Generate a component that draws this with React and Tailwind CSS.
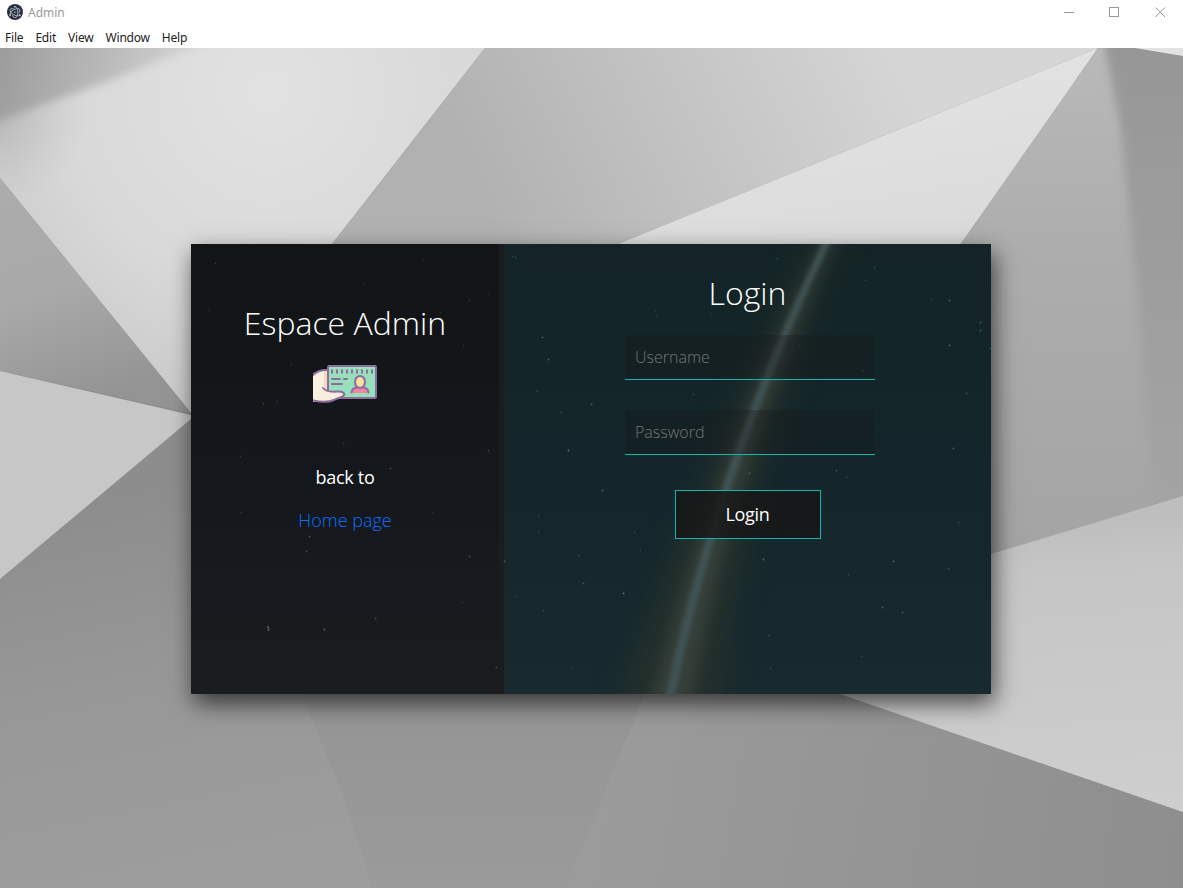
import React from "react";
import { SiElectron } from "react-icons/si";

const STARS = [
  [172, 39, 0.3, "#2d7fa5"], [24, 19, 0.3, "#9ab"], [297, 50, 0.15, "#9ab"], [86, 157, 0.2, "#9cb"],
  [278, 56, 0.2, "#9ab"], [232, 16, 0.2, "#9ab"], [18, 66, 0.2, "#9ab"], [297, 206, 0.3, "#9cb"], [199, 224, 0.3, "#ccc"],
  [118, 292, 0.35, "#ccc"], [115, 307, 0.3, "#ccc"], [278, 312, 0.3, "#ccc"], [184, 374, 0.3, "#ccc"], [133, 385, 0.4, "#ccc"],
  [305, 423, 0.3, "#ccc"], [152, 199, 0.2, "#ccc"], [50, 268, 0.2, "#ccc"], [272, 101, 0.2, "#9ab"], [249, 68, 0.2, "#5aa"],
  [72, 159, 0.25, "#9cb"], [100, 120, 0.2, "#9cb"], [49, 212, 0.2, "#9cb"], [241, 268, 0.2, "#9ab"], [271, 358, 0.15, "#ccc"],
  [321, 12, 0.3, "#4aa"], [324, 13, 0.3, "#4aa"], [351, 93, 0.4, "#9bb"], [357, 115, 0.4, "#aba"], [346, 147, 0.3, "#9bb"],
  [370, 168, 0.3, "#aba"], [377, 206, 0.7, "#5ab0c8"], [400, 160, 0.4, "#aba"], [586, 14, 0.5, "#2d7fa5"], [740, 55, 0.4, "#4878b8"],
  [758, 56, 0.4, "#9bb"], [758, 101, 0.45, "#9bb"], [789, 78, 0.4, "#9bb"], [789, 86, 0.4, "#9bb"], [799, 104, 0.4, "#5ab0c8"],
  [671, 126, 0.3, "#9bb"], [762, 204, 0.4, "#9bb"], [775, 149, 0.3, "#9bb"], [683, 23, 0.2, "#9bb"], [674, 36, 0.2, "#9bb"],
  [464, 67, 0.3, "#4878b8"], [465, 72, 0.3, "#4878b8"], [519, 69, 0.2, "#9bb"], [608, 101, 0.25, "#9bb"], [502, 150, 0.3, "#4aa"],
  [572, 315, 0.45, "#7dd"], [702, 317, 0.45, "#7ca"], [757, 324, 0.3, "#9bb"], [691, 363, 0.4, "#9bb"], [711, 368, 0.4, "#9bb"],
  [578, 391, 0.3, "#9bb"], [432, 349, 0.5, "#9db"], [411, 246, 0.4, "#9db"], [767, 278, 0.3, "#9bb"], [645, 226, 0.35, "#9bb"],
  [655, 233, 0.25, "#9bb"], [558, 229, 0.35, "#ba9"], [657, 330, 0.25, "#9bb"], [670, 412, 0.2, "#9bb"], [387, 311, 0.3, "#9bb"],
  [392, 339, 0.35, "#9bb"], [325, 352, 0.25, "#9bb"], [352, 366, 0.25, "#9bb"], [313, 317, 0.4, "#9bb"], [380, 423, 0.2, "#9bb"],
  [347, 287, 0.2, "#9bb"], [347, 272, 0.2, "#9bb"], [449, 306, 0.2, "#9bb"], [443, 288, 0.2, "#9bb"], [579, 424, 0.2, "#9bb"],
];

function Backdrop() {
  return (
    <svg className="absolute inset-0 size-full" viewBox="0 48 1183 840" preserveAspectRatio="none">
      <defs>
        <radialGradient id="lit" gradientUnits="userSpaceOnUse" cx="270" cy="90" r="400">
          <stop offset="0" stopColor="#e2e2e2" />
          <stop offset=".5" stopColor="#d9d9d9" />
          <stop offset="1" stopColor="#c2c2c2" />
        </radialGradient>
        <linearGradient id="corner" gradientUnits="userSpaceOnUse" x1="0" y1="50" x2="200" y2="85">
          <stop offset="0" stopColor="#9c9c9c" />
          <stop offset=".5" stopColor="#b8b8b8" />
          <stop offset="1" stopColor="#d6d6d6" />
        </linearGradient>
        <radialGradient id="edgeShade" gradientUnits="userSpaceOnUse" cx="-10" cy="110" r="100">
          <stop offset="0" stopColor="#aaaaaa" stopOpacity=".8" />
          <stop offset="1" stopColor="#c4c4c4" stopOpacity="0" />
        </radialGradient>
        <linearGradient id="leftDark" gradientUnits="userSpaceOnUse" x1="20" y1="180" x2="90" y2="400">
          <stop offset="0" stopColor="#acacac" />
          <stop offset=".5" stopColor="#a9a9a9" />
          <stop offset="1" stopColor="#949494" />
        </linearGradient>
        <linearGradient id="topMid" gradientUnits="userSpaceOnUse" x1="500" y1="240" x2="900" y2="50">
          <stop offset="0" stopColor="#b1b1b1" />
          <stop offset=".45" stopColor="#c2c2c2" />
          <stop offset="1" stopColor="#d6d6d6" />
        </linearGradient>
        <linearGradient id="ray" gradientUnits="userSpaceOnUse" x1="900" y1="60" x2="930" y2="250">
          <stop offset="0" stopColor="#e3e3e3" />
          <stop offset="1" stopColor="#dadada" />
        </linearGradient>
        <linearGradient id="rightMid" x1="0" y1="0" x2="0" y2="1">
          <stop offset="0" stopColor="#b9b9b9" />
          <stop offset=".4" stopColor="#adadad" />
          <stop offset="1" stopColor="#a4a4a4" />
        </linearGradient>
        <linearGradient id="rightEdge" x1="0" y1="0" x2="0" y2="1">
          <stop offset="0" stopColor="#979797" />
          <stop offset="1" stopColor="#a4a4a4" />
        </linearGradient>
        <linearGradient id="rightLow" gradientUnits="userSpaceOnUse" x1="1110" y1="520" x2="1130" y2="800">
          <stop offset="0" stopColor="#bebebe" />
          <stop offset=".15" stopColor="#c5c5c5" />
          <stop offset="1" stopColor="#cecece" />
        </linearGradient>
        <linearGradient id="floor" gradientUnits="userSpaceOnUse" x1="100" y1="500" x2="180" y2="888">
          <stop offset="0" stopColor="#8d8d8d" />
          <stop offset=".5" stopColor="#989898" />
          <stop offset="1" stopColor="#9d9d9d" />
        </linearGradient>
        <linearGradient id="floorMid" gradientUnits="userSpaceOnUse" x1="0" y1="694" x2="0" y2="888">
          <stop offset="0" stopColor="#959595" />
          <stop offset="1" stopColor="#9a9a9a" />
        </linearGradient>
        <linearGradient id="floorRight" gradientUnits="userSpaceOnUse" x1="600" y1="800" x2="1183" y2="888">
          <stop offset="0" stopColor="#9b9b9b" />
          <stop offset="1" stopColor="#8e8e8e" />
        </linearGradient>
        <filter id="soft" colorInterpolationFilters="sRGB"><feGaussianBlur stdDeviation="4" /></filter>
      </defs>
      <rect y="48" width="1183" height="840" fill="url(#floor)" />
      <path d="M300 690L345 800L372 888H570L645 694Z" fill="url(#floorMid)" />
      <path d="M645 694L565 888H1183V812L840 694Z" fill="url(#floorRight)" />
      <path d="M0 48H485L332 244L260 480L191 413L0 178Z" fill="url(#lit)" />
      <path d="M0 48H130V220H35L0 178Z" fill="url(#edgeShade)" />
      <path d="M-8 36H222L100 84L-8 123Z" fill="url(#corner)" filter="url(#soft)" />
      <path d="M0 178L191 413L0 371Z" fill="url(#leftDark)" />
      <path d="M0 371L191 415V419L0 579Z" fill="#c7c7c7" />
      <path d="M485 48H1098L618 244H332Z" fill="url(#topMid)" />
      <path d="M1098 48L618 244H962Z" fill="url(#ray)" />
      <path d="M1098 48H1183V496L991 554L900 330Z" fill="url(#rightMid)" />
      <path d="M1103 36H1195V500L1152 506L1138 300L1121 130Z" fill="url(#rightEdge)" filter="url(#soft)" />
      <path d="M1135 48H1183V56Z" fill="#e3e3e3" />
      <path d="M1183 496V812L840 694L991 554Z" fill="url(#rightLow)" />
    </svg>
  );
}

function NightSky() {
  return (
    <svg className="absolute inset-0 size-full" viewBox="0 0 800 450">
      <defs>
        <linearGradient id="night" x1="0" y1="0" x2="0" y2="1">
          <stop offset="0" stopColor="#121416" />
          <stop offset=".55" stopColor="#14181c" />
          <stop offset="1" stopColor="#1b1c20" />
        </linearGradient>
        <linearGradient id="teal" x1="0" y1="0" x2="0" y2="1">
          <stop offset="0" stopColor="#142426" />
          <stop offset=".5" stopColor="#14262b" />
          <stop offset="1" stopColor="#182a2f" />
        </linearGradient>
        <filter id="wide" x="-100%" width="300%" y="-20%" height="140%" colorInterpolationFilters="sRGB"><feGaussianBlur stdDeviation="15" /></filter>
        <filter id="mid" x="-100%" width="300%" y="-20%" height="140%" colorInterpolationFilters="sRGB"><feGaussianBlur stdDeviation="7" /></filter>
        <filter id="thin" x="-50%" width="200%" colorInterpolationFilters="sRGB"><feGaussianBlur stdDeviation="2.200" /></filter>
        <clipPath id="pane"><rect x="313" width="487" height="450" /></clipPath>
      </defs>
      <rect width="308" height="450" fill="url(#night)" />
      <rect x="308" width="5" height="450" fill="#1c1c1c" />
      <rect x="313" width="487" height="450" fill="url(#teal)" />
      <g clipPath="url(#pane)">
        <path d="M636 -20Q510 215 425 480H525Q550 225 652 -20Z" fill="#28322b" opacity=".85" filter="url(#wide)" />
        <path d="M641 -20Q518 225 457 475H497Q536 225 650 -20Z" fill="#3d4640" opacity=".75" filter="url(#mid)" />
        <path d="M641 -20Q520 225 471 470H480Q528 225 648 -20Z" fill="#415355" filter="url(#thin)" />
      </g>
      {STARS.map(([x, y, opacity, fill]) => (
        <circle key={`${x}-${y}`} cx={x + 0.5} cy={y + 0.5} r="1" fill={fill} opacity={opacity * 0.8} />
      ))}
      <path d="M76.500 382Q78 384 77.500 387" stroke="#888" strokeWidth="1.500" opacity=".6" fill="none" />
    </svg>
  );
}

function AdminCard() {
  return (
    <svg className="h-16 w-16" viewBox="0 0 64 64" fill="none" strokeLinecap="round" strokeLinejoin="round">
      <path d="M0 22C4 18 10 17 15 18V50H0Z" fill="#faefde" />
      <path d="M11 18H15V44L11 42Z" fill="#f2d9bd" />
      <path d="M0 23C4 19 9 17.500 15 18" stroke="#8d6c9f" strokeWidth="2" />
      <rect x="15" y="14" width="48" height="32" rx="1.500" fill="#97e0bb" stroke="#8d6c9f" strokeWidth="2" />
      <path d="M18 19.500H61" stroke="#8d6c9f" strokeWidth="4" strokeDasharray="2 3" strokeLinecap="butt" />
      <path d="M19 27H27M31 27H34M19 32H29" stroke="#8d6c9f" strokeWidth="2" />
      <path d="M39 41C39.500 36 42 35 47 35S54.500 36 55 41Z" fill="#f283a4" />
      <path d="M38.500 40.500C39 36.500 42 35 47 35S55 36.500 55.500 40.500" stroke="#8d6c9f" strokeWidth="2" />
      <ellipse cx="47" cy="30" rx="5" ry="6" fill="#fae0a0" stroke="#8d6c9f" strokeWidth="2" />
      <path d="M0 30H11V37C14 40 19 40 24 39.500C28 39 31 40 31 43C29 46 24 47 21 48C14 51 7 50 0 48Z" fill="#faefde" />
      <path d="M10 36C13 40 18 40 24 39.500C29 39 32 41 31 43C29 46 24 46 21 48C14 51 7 50 0 48.500" stroke="#8d6c9f" strokeWidth="2" />
    </svg>
  );
}

function AppIcon() {
  return (
    <span className="flex size-4 items-center justify-center rounded-full bg-[#2b2e3a] text-[#c4e8f0]">
      <SiElectron className="size-3 stroke-current stroke-[0.6]" />
    </span>
  );
}

export default function App() {
  return (
    <div className="flex h-screen flex-col overflow-hidden bg-white font-['Open_Sans','Noto_Sans',sans-serif]">
      <header className="flex h-12 shrink-0 flex-col text-[12px]">
        <div className="flex h-6 items-center justify-between pl-[7px] pr-[17px]">
          <div className="flex items-center gap-[5px] text-[#999]">
            <AppIcon />
            <span className="pt-0.5 font-['Noto_Sans',sans-serif] leading-6">Admin</span>
          </div>
          <svg className="h-3 w-[102px]" viewBox="0 0 102 12" fill="none" stroke="#999">
            <path d="M0 6.500H10M91.500 1.500L101 11M101 1.500L91.500 11" />
            <rect x="45.500" y="1.500" width="9" height="9" />
          </svg>
        </div>
        <nav className="flex h-6 items-center gap-3 pl-[5px] pt-1 font-['Noto_Sans',sans-serif] tracking-[-0.2px] text-[#222]">
          <span>File</span>
          <span>Edit</span>
          <span>View</span>
          <span>Window</span>
          <span>Help</span>
        </nav>
      </header>
      <main className="relative flex grow items-start justify-center pt-[196px] pr-px">
        <Backdrop />
        <section className="relative flex h-[450px] w-[800px] font-light text-white shadow-[3px_9px_22px_rgba(0,0,0,0.65)]">
          <NightSky />
          <div className="relative flex w-[308px] flex-col items-center pt-[55px]">
            <h1 className="text-[32px] leading-[48px]">Espace Admin</h1>
            <div className="mt-[5px]"><AdminCard /></div>
            <p className="mt-12 text-[18px] leading-[27px] font-normal tracking-[-0.3px]">back to</p>
            <a className="mt-4 text-[18px] leading-[27px] text-[#0d6efd]">Home page</a>
          </div>
          <form className="relative ml-[5px] flex w-[487px] flex-col items-center pt-[25px]">
            <h2 className="text-[32px] leading-[48px]">Login</h2>
            <input
              className="mt-[18px] ml-[5px] h-[45px] w-[250px] border-b border-[#13b5b1] bg-[#171717]/30 px-2.5 text-[16px] placeholder:text-[#757575]"
              placeholder="Username"
            />
            <input
              className="mt-[30px] ml-[5px] h-[45px] w-[250px] border-b border-[#13b5b1] bg-[#171717]/30 px-2.5 text-[16px] placeholder:text-[#757575]"
              placeholder="Password"
              type="password"
            />
            <button className="mt-[35px] h-[49px] w-[146px] border border-[#13b5b1] bg-[#171717]/80 text-[18px] font-normal tracking-[-0.3px]" type="button">
              Login
            </button>
          </form>
        </section>
      </main>
    </div>
  );
}
